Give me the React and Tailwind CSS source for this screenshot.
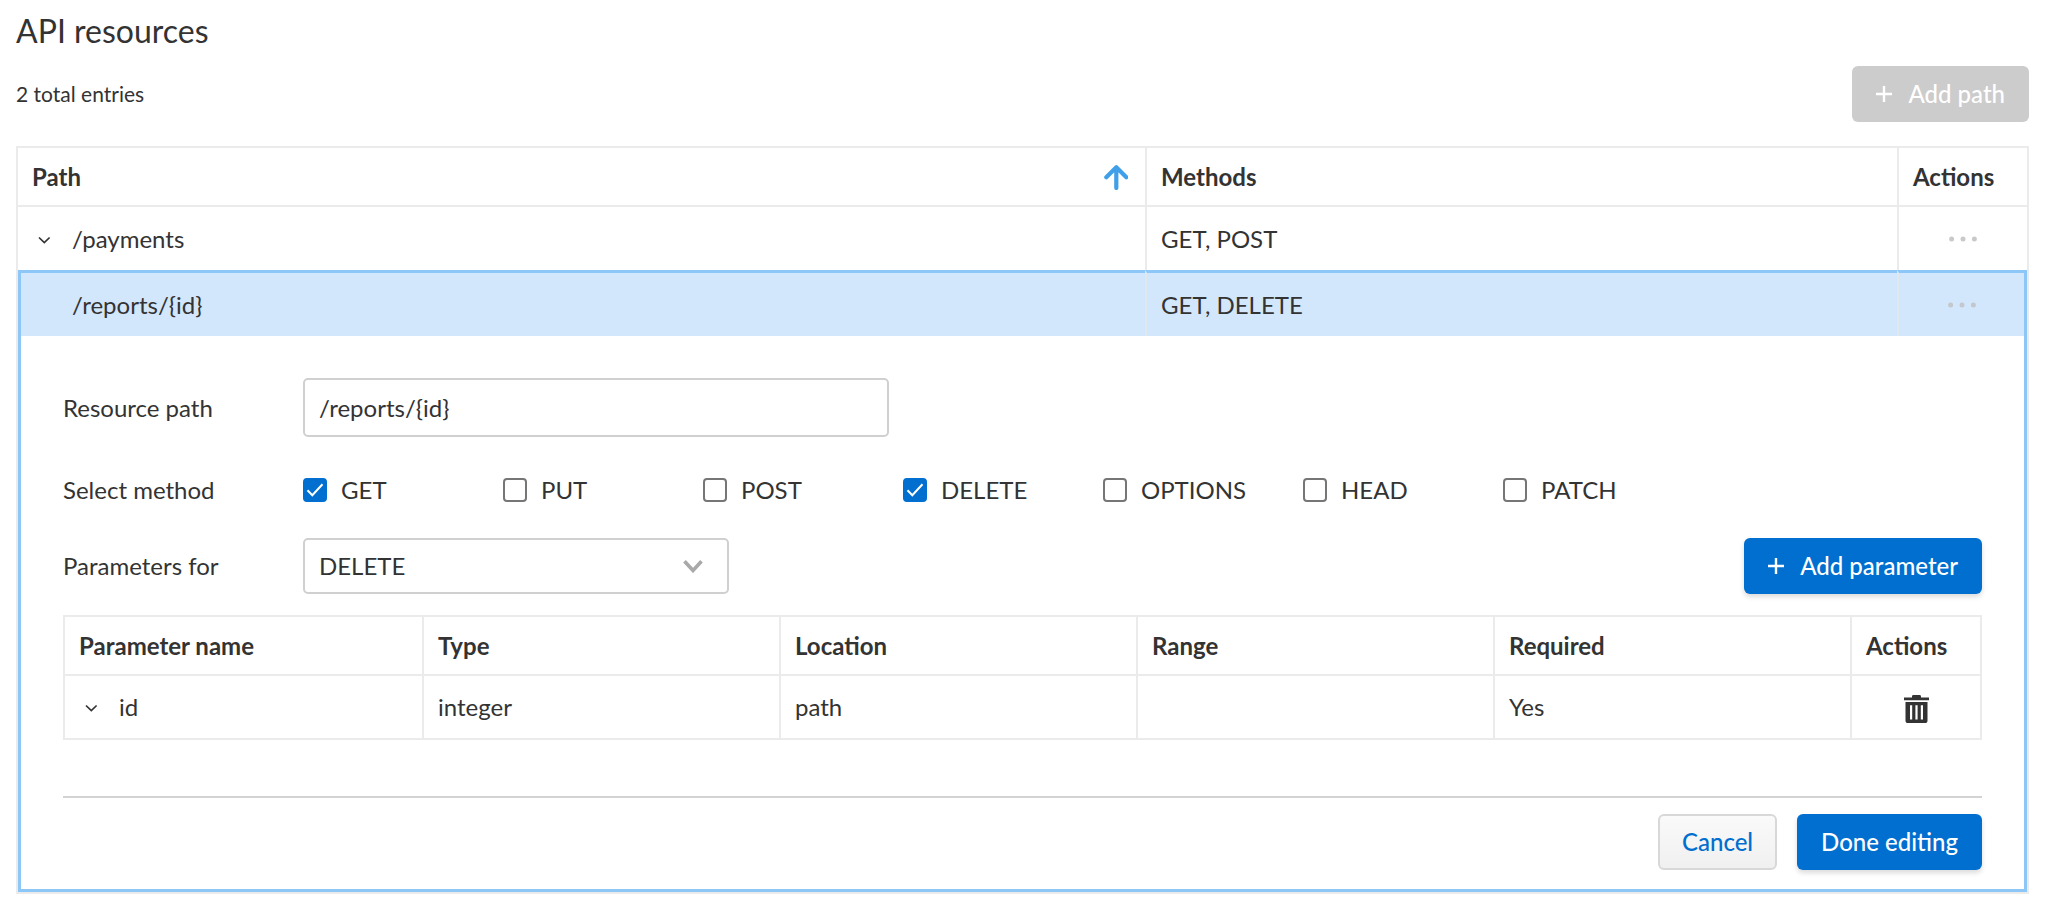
import { useState } from "react";

const METHODS = ["GET", "PUT", "POST", "DELETE", "OPTIONS", "HEAD", "PATCH"];

const PARAMETERS = [
  { name: "id", type: "integer", location: "path", range: "", required: "Yes" },
];

function PlusIcon() {
  return (
    <svg viewBox="0 0 16 16" className="size-4 shrink-0" aria-hidden="true">
      <path d="M8 0v16M0 8h16" stroke="currentColor" strokeWidth="2.4" fill="none" />
    </svg>
  );
}

function RowChevron() {
  return (
    <svg viewBox="0 0 24 24" className="size-6" aria-hidden="true">
      <path d="M7 10.500l5.300 5 5.300-5" stroke="currentColor" strokeWidth="1.7" fill="none" />
    </svg>
  );
}

function SortArrow() {
  return (
    <svg viewBox="0 0 24 26" className="h-[26px] w-6 text-[#3f9fe8]" aria-hidden="true">
      <path
        d="M12.300 24V3.500M2.300 13.200L12.300 3.300l10 9.900"
        stroke="currentColor"
        strokeWidth="4.200"
        strokeLinecap="round"
        strokeLinejoin="round"
        fill="none"
      />
    </svg>
  );
}

function Dots() {
  return (
    <svg viewBox="0 0 28 6" className="h-[6px] w-7" fill="currentColor" aria-hidden="true">
      <circle cx="2.6" cy="3" r="2.5" />
      <circle cx="14" cy="3" r="2.5" />
      <circle cx="25.4" cy="3" r="2.5" />
    </svg>
  );
}

function TrashIcon() {
  return (
    <svg viewBox="0 0 25 28" className="h-7 w-[25px]" fill="currentColor" aria-hidden="true">
      <path d="M8 2.4V1.4Q8 0 9.4 0h6.2Q17 0 17 1.4v1h8v2.8H0V2.4z" />
      <path
        fillRule="evenodd"
        d="M1.5 7h22v18.4q0 2.6-2.6 2.6H4.1q-2.6 0-2.6-2.6zM6 10.3V24.5h2.2V10.3zM11.4 10.3V24.5h2.2V10.3zM16.8 10.3V24.5H19V10.3z"
      />
    </svg>
  );
}

function MethodCheckbox({ label, checked, onChange }) {
  return (
    <label className="flex w-[200px] items-center gap-[14px]">
      <span className="grid size-6">
        <input
          type="checkbox"
          checked={checked}
          onChange={onChange}
          className="col-start-1 row-start-1 size-6 appearance-none rounded-[4px] border-2 border-[#767676] bg-white checked:border-[#006fcf] checked:bg-[#006fcf]"
        />
        {checked && (
          <svg
            viewBox="0 0 24 24"
            className="pointer-events-none col-start-1 row-start-1 size-6 text-white"
            aria-hidden="true"
          >
            <path d="M4.5 12.2l4.8 5L19.5 6.2" stroke="currentColor" strokeWidth="2" fill="none" />
          </svg>
        )}
      </span>
      {label}
    </label>
  );
}

const primaryButton =
  "flex h-14 items-center rounded-[6px] bg-[#006fcf] px-6 font-medium text-white shadow-[0_3px_5px_rgba(0,0,0,0.14)]";
const headCell = "h-[59px] border-b-2 border-[#ebebeb] px-[14px] text-left font-bold";
const divider = "border-l-2 border-[#ebebeb]";

export default function App() {
  const [selected, setSelected] = useState(["GET", "DELETE"]);
  const [path, setPath] = useState("/reports/{id}");
  const [method, setMethod] = useState("DELETE");

  const toggle = (name) =>
    setSelected((list) =>
      list.includes(name) ? list.filter((item) => item !== name) : [...list, name]
    );

  return (
    <main className="bg-white pt-[11px] pr-[19px] pb-6 pl-4 font-['Lato',sans-serif] text-[24px] leading-[30px] text-[#333]">
      <h1 className="text-[32px] leading-[40px]">API resources</h1>

      <div className="mt-[15px] flex items-center justify-between">
        <p className="text-[21px]">2 total entries</p>
        <button
          type="button"
          disabled
          className="flex h-14 items-center gap-4 rounded-[6px] bg-[#ccc] px-6 font-medium text-white"
        >
          <PlusIcon />
          Add path
        </button>
      </div>

      <table className="mt-6 w-full table-fixed border-separate border-spacing-0 border-2 border-[#ebebeb]">
        <colgroup>
          <col className="w-[56.1%]" />
          <col />
          <col className="w-[130px]" />
        </colgroup>
        <thead>
          <tr>
            <th scope="col" aria-sort="ascending" className={headCell}>
              <div className="flex items-center justify-between pr-[3px]">
                Path
                <button type="button" aria-label="Sort by path">
                  <SortArrow />
                </button>
              </div>
            </th>
            <th scope="col" className={`${headCell} ${divider}`}>Methods</th>
            <th scope="col" className={`${headCell} ${divider}`}>Actions</th>
          </tr>
        </thead>
        <tbody>
          <tr>
            <td className="h-[63px] px-[14px]">
              <div className="flex items-center gap-4">
                <button type="button" aria-label="Expand /payments" className="size-6">
                  <RowChevron />
                </button>
                /payments
              </div>
            </td>
            <td className={`px-[14px] ${divider}`}>GET, POST</td>
            <td className={divider}>
              <button
                type="button"
                aria-label="Actions for /payments"
                className="flex h-8 w-full items-center justify-center text-[#c9c9c9]"
              >
                <Dots />
              </button>
            </td>
          </tr>
          <tr className="bg-[#d3e7fc]">
            <td className="h-[66px] border-t-3 border-l-3 border-[#8cc7f8] pr-[14px] pl-[51px]">
              /reports/&#123;id&#125;
            </td>
            <td className="border-t-3 border-l-2 border-t-[#8cc7f8] border-l-[#dfe7ef] px-[14px]">
              GET, DELETE
            </td>
            <td className="border-t-3 border-r-3 border-l-2 border-t-[#8cc7f8] border-r-[#8cc7f8] border-l-[#dfe7ef]">
              <button
                type="button"
                aria-label="Actions for /reports/{id}"
                className="flex h-8 w-full items-center justify-center text-[#c4c8cc]"
              >
                <Dots />
              </button>
            </td>
          </tr>
          <tr>
            <td
              colSpan={3}
              className="border-x-3 border-b-3 border-[#8cc7f8] px-[42px] pt-[42px] pb-[19px]"
            >
              <div className="flex items-center">
                <label htmlFor="resource-path" className="w-[240px]">Resource path</label>
                <input
                  id="resource-path"
                  type="text"
                  value={path}
                  onChange={(event) => setPath(event.target.value)}
                  className="h-[59px] w-[586px] rounded-[5px] border-2 border-[#d0d0d0] bg-white px-[14px]"
                />
              </div>

              <fieldset className="mt-[38px] flex items-center">
                <legend className="float-left w-[240px]">Select method</legend>
                <div className="flex flex-wrap">
                  {METHODS.map((name) => (
                    <MethodCheckbox
                      key={name}
                      label={name}
                      checked={selected.includes(name)}
                      onChange={() => toggle(name)}
                    />
                  ))}
                </div>
              </fieldset>

              <div className="mt-[33px] flex items-center">
                <label htmlFor="parameters-for" className="w-[240px]">Parameters for</label>
                <div className="grid w-[426px] items-center">
                  <select
                    id="parameters-for"
                    value={method}
                    onChange={(event) => setMethod(event.target.value)}
                    className="col-start-1 row-start-1 h-14 appearance-none rounded-[5px] border-2 border-[#d0d0d0] bg-white px-[14px]"
                  >
                    {METHODS.filter((name) => selected.includes(name)).map((name) => (
                      <option key={name}>{name}</option>
                    ))}
                  </select>
                  <svg
                    viewBox="0 0 20 14"
                    className="pointer-events-none col-start-1 row-start-1 mr-[26px] h-[14px] w-5 justify-self-end text-[#a9a9a9]"
                    aria-hidden="true"
                  >
                    <path d="M1.500 2.300L10 11.500l8.500-9.200" stroke="currentColor" strokeWidth="3.600" fill="none" />
                  </svg>
                </div>
                <button type="button" className={`${primaryButton} ml-auto gap-4`}>
                  <PlusIcon />
                  Add parameter
                </button>
              </div>

              <table className="mt-[21px] w-full table-fixed border-separate border-spacing-0 border-2 border-[#ebebeb]">
                <colgroup>
                  <col />
                  <col />
                  <col />
                  <col />
                  <col />
                  <col className="w-[130px]" />
                </colgroup>
                <thead>
                  <tr>
                    <th scope="col" className={headCell}>Parameter name</th>
                    <th scope="col" className={`${headCell} ${divider}`}>Type</th>
                    <th scope="col" className={`${headCell} ${divider}`}>Location</th>
                    <th scope="col" className={`${headCell} ${divider}`}>Range</th>
                    <th scope="col" className={`${headCell} ${divider}`}>Required</th>
                    <th scope="col" className={`${headCell} ${divider}`}>Actions</th>
                  </tr>
                </thead>
                <tbody>
                  {PARAMETERS.map((row) => (
                    <tr key={row.name}>
                      <td className="h-[62px] px-[14px]">
                        <div className="flex items-center gap-4">
                          <button type="button" aria-label={`Expand ${row.name}`} className="size-6">
                            <RowChevron />
                          </button>
                          {row.name}
                        </div>
                      </td>
                      <td className={`px-[14px] ${divider}`}>{row.type}</td>
                      <td className={`px-[14px] ${divider}`}>{row.location}</td>
                      <td className={`px-[14px] ${divider}`}>{row.range}</td>
                      <td className={`px-[14px] ${divider}`}>{row.required}</td>
                      <td className={divider}>
                        <button
                          type="button"
                          aria-label={`Delete ${row.name}`}
                          className="flex w-full justify-center pt-1"
                        >
                          <TrashIcon />
                        </button>
                      </td>
                    </tr>
                  ))}
                </tbody>
              </table>

              <div className="mt-14 flex justify-end gap-5 border-t-2 border-[#d2d4d4] pt-4">
                <button
                  type="button"
                  className="h-14 rounded-[6px] border-2 border-[#d8d8d8] bg-linear-to-b from-[#fafafa] to-[#f0f0f0] px-[22px] font-medium text-[#006fcf]"
                >
                  Cancel
                </button>
                <button type="button" className={primaryButton}>Done editing</button>
              </div>
            </td>
          </tr>
        </tbody>
      </table>
    </main>
  );
}
